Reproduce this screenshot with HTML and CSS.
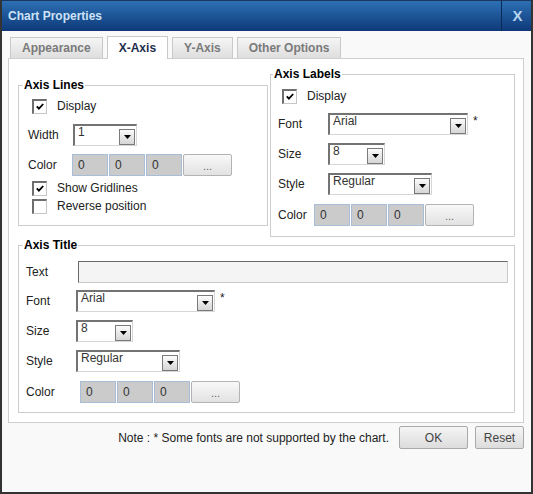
FILE: index.html
```html
<!DOCTYPE html>
<html>
<head>
<meta charset="utf-8">
<title>Chart Properties</title>
<link rel="stylesheet" href="styles.css">
</head>
<body>
<div class="window">
  <div class="titlebar">
    <span class="title">Chart Properties</span>
    <span class="close">X</span>
  </div>
  <div class="body">
    <div class="tabs">
      <div class="tab">Appearance</div>
      <div class="tab active">X-Axis</div>
      <div class="tab">Y-Axis</div>
      <div class="tab">Other Options</div>
    </div>
    <div class="panel">
      <div class="top-row">
        <fieldset class="group lines">
          <legend>Axis Lines</legend>
          <div class="check-row first">
            <span class="cb"><svg width="8" height="7" viewBox="0 0 8 7"><polyline points="0.8,3.4 2.9,5.6 7.2,1" fill="none" stroke="#000" stroke-width="1.8"/></svg></span>
            <span class="cb-label">Display</span>
          </div>
          <div class="row mt9">
            <span class="lbl w45">Width</span>
            <div class="select s64"><span class="val">1</span><span class="arr"><svg width="7" height="4" viewBox="0 0 7 4"><polygon points="0,0 7,0 3.5,4" fill="#000"/></svg></span></div>
          </div>
          <div class="row mt8">
            <span class="lbl w44">Color</span>
            <span class="rgb">0</span><span class="rgb">0</span><span class="rgb">0</span><span class="dots">...</span>
          </div>
          <div class="check-row mt3">
            <span class="cb"><svg width="8" height="7" viewBox="0 0 8 7"><polyline points="0.8,3.4 2.9,5.6 7.2,1" fill="none" stroke="#000" stroke-width="1.8"/></svg></span>
            <span class="cb-label">Show Gridlines</span>
          </div>
          <div class="check-row">
            <span class="cb"></span>
            <span class="cb-label">Reverse position</span>
          </div>
        </fieldset>
        <fieldset class="group labels">
          <legend>Axis Labels</legend>
          <div class="check-row first">
            <span class="cb"><svg width="8" height="7" viewBox="0 0 8 7"><polyline points="0.8,3.4 2.9,5.6 7.2,1" fill="none" stroke="#000" stroke-width="1.8"/></svg></span>
            <span class="cb-label">Display</span>
          </div>
          <div class="row mt8">
            <span class="lbl w50">Font</span>
            <div class="select s140"><span class="val">Arial</span><span class="arr"><svg width="7" height="4" viewBox="0 0 7 4"><polygon points="0,0 7,0 3.5,4" fill="#000"/></svg></span></div>
            <span class="star">*</span>
          </div>
          <div class="row mt8">
            <span class="lbl w50">Size</span>
            <div class="select s57"><span class="val">8</span><span class="arr"><svg width="7" height="4" viewBox="0 0 7 4"><polygon points="0,0 7,0 3.5,4" fill="#000"/></svg></span></div>
          </div>
          <div class="row mt8">
            <span class="lbl w50">Style</span>
            <div class="select s104"><span class="val">Regular</span><span class="arr"><svg width="7" height="4" viewBox="0 0 7 4"><polygon points="0,0 7,0 3.5,4" fill="#000"/></svg></span></div>
          </div>
          <div class="row mt9">
            <span class="lbl w36">Color</span>
            <span class="rgb">0</span><span class="rgb">0</span><span class="rgb">0</span><span class="dots">...</span>
          </div>
        </fieldset>
      </div>
      <fieldset class="group title-group">
        <legend>Axis Title</legend>
        <div class="row">
          <span class="lbl w51">Text</span>
          <span class="text-input"></span>
        </div>
        <div class="row mt7">
          <span class="lbl w50">Font</span>
          <div class="select s139"><span class="val">Arial</span><span class="arr"><svg width="7" height="4" viewBox="0 0 7 4"><polygon points="0,0 7,0 3.5,4" fill="#000"/></svg></span></div>
          <span class="star">*</span>
        </div>
        <div class="row mt8">
          <span class="lbl w50">Size</span>
          <div class="select s57"><span class="val">8</span><span class="arr"><svg width="7" height="4" viewBox="0 0 7 4"><polygon points="0,0 7,0 3.5,4" fill="#000"/></svg></span></div>
        </div>
        <div class="row mt8">
          <span class="lbl w50">Style</span>
          <div class="select s104"><span class="val">Regular</span><span class="arr"><svg width="7" height="4" viewBox="0 0 7 4"><polygon points="0,0 7,0 3.5,4" fill="#000"/></svg></span></div>
        </div>
        <div class="row mt9">
          <span class="lbl w54">Color</span>
          <span class="rgb">0</span><span class="rgb">0</span><span class="rgb">0</span><span class="dots">...</span>
        </div>
      </fieldset>
    </div>
    <div class="footer">
      <span class="note">Note : * Some fonts are not supported by the chart.</span>
      <button class="btn ok">OK</button>
      <button class="btn reset">Reset</button>
    </div>
  </div>
</div>
</body>
</html>
```
FILE: styles.css
```css
html, body {
  margin: 0;
  padding: 0;
  background: #ffffff;
}
body {
  font-family: "Liberation Sans", Arial, sans-serif;
  font-size: 12px;
  color: #222;
}
.window {
  width: 533px;
  height: 494px;
  box-sizing: border-box;
  border: 2px solid #333;
  border-top: 1px solid #1b3560;
  background: #f9f9f9;
  display: flex;
  flex-direction: column;
}
.titlebar {
  display: flex;
  height: 30px;
  background: linear-gradient(#2c70b4, #0e3979);
  flex: none;
}
.title {
  flex: 1;
  padding-left: 6px;
  line-height: 30px;
  font-weight: bold;
  font-size: 12px;
  color: #cde2f6;
}
.close {
  width: 30px;
  box-sizing: border-box;
  border-left: 1px solid #0a2a56;
  line-height: 30px;
  text-align: center;
  font-weight: bold;
  font-size: 15px;
  color: #b7d5f0;
  padding-left: 2px;
}
.body {
  padding: 6px 7px 0 6px;
}
.tabs {
  display: flex;
  align-items: flex-end;
  gap: 4px;
  margin-left: 2px;
  height: 21px;
}
.tab {
  height: 20px;
  line-height: 20px;
  padding: 0 11px;
  border: 1px solid #c9c9c9;
  border-bottom: none;
  background: linear-gradient(#f5f5f5, #dedede);
  color: #7a7a7a;
  font-weight: bold;
  font-size: 12px;
}
.tab.active {
  height: 22px;
  line-height: 22px;
  margin-bottom: -1px;
  background: #fff;
  color: #1e2f4d;
  position: relative;
}
.panel {
  border: 1px solid #cfcfcf;
  background: #fff;
  padding: 8px 8px 9px 9px;
}
.top-row {
  display: flex;
  align-items: flex-start;
  gap: 2px;
}
.group {
  border: 1px solid #cdcdcd;
  margin: 0;
  padding: 0;
  min-width: 0;
  box-sizing: border-box;
}
.group legend {
  font-weight: bold;
  font-size: 12px;
  line-height: 14px;
  padding: 0 1px;
  color: #000;
}
.lines {
  width: 250px;
  margin-top: 11px;
  padding: 5px 0 10px 9px;
}
.lines legend { margin-left: -5px; }
.labels {
  width: 245px;
  padding: 6px 0 10px 7px;
}
.labels legend { margin-left: -5px; }
.title-group {
  width: 497px;
  margin-top: 1px;
  padding: 9px 0 9px 7px;
}
.title-group legend { margin-left: -3px; }
.row {
  display: flex;
  align-items: center;
  height: 22px;
}
.check-row {
  display: flex;
  align-items: center;
  height: 18px;
  padding-left: 4px;
}
.mt3 { margin-top: 3px; }
.mt7 { margin-top: 7px; }
.mt8 { margin-top: 8px; }
.mt9 { margin-top: 9px; }
.lbl { flex: none; color: #222; }
.w36 { width: 36px; }
.w44 { width: 44px; }
.w45 { width: 45px; }
.w50 { width: 50px; }
.w51 { width: 51px; }
.w54 { width: 54px; }
.cb {
  width: 15px;
  height: 15px;
  box-sizing: border-box;
  border-top: 2px solid #6e6e6e;
  border-left: 2px solid #6e6e6e;
  border-right: 1px solid #c6c6c6;
  border-bottom: 1px solid #c6c6c6;
  background: #fff;
  display: flex;
  align-items: center;
  justify-content: center;
  margin-right: 10px;
  flex: none;
}
.cb svg { display: block; }
.cb-label { color: #222; }
.select {
  display: flex;
  height: 22px;
  box-sizing: border-box;
  border-top: 2px solid #737373;
  border-left: 2px solid #737373;
  border-right: 1px solid #d6d6d6;
  border-bottom: 1px solid #d6d6d6;
  background: #fff;
  flex: none;
}
.s57 { width: 57px; }
.s64 { width: 64px; }
.s104 { width: 104px; }
.s139 { width: 139px; }
.s140 { width: 140px; }
.select .val {
  flex: 1;
  padding-left: 3px;
  line-height: 13px;
  color: #333;
}
.select .arr {
  align-self: flex-end;
  width: 16px;
  height: 16px;
  box-sizing: border-box;
  margin-right: 1px;
  border: 1px solid #7a7a7a;
  background: linear-gradient(#fbfbfb, #d6d6d6);
  display: flex;
  align-items: center;
  justify-content: center;
}
.select .arr svg { display: block; }
.star {
  align-self: flex-start;
  margin-left: 5px;
  padding-top: 2px;
  line-height: 12px;
  color: #222;
}
.rgb {
  width: 36px;
  height: 22px;
  box-sizing: border-box;
  border: 1px solid #a9bdd7;
  background: #cbcbcb;
  padding-left: 5px;
  line-height: 20px;
  color: #333;
  margin-right: 1px;
  flex: none;
}
.dots {
  width: 49px;
  height: 22px;
  box-sizing: border-box;
  border: 1px solid #b3b3b3;
  border-radius: 2px;
  background: linear-gradient(#f8f8f8, #e2e2e2);
  text-align: center;
  line-height: 22px;
  font-size: 11px;
  color: #666;
  flex: none;
}
.text-input {
  width: 430px;
  height: 22px;
  box-sizing: border-box;
  margin-left: 1px;
  border: 1px solid #cacaca;
  border-top-color: #6a6a6a;
  border-left-color: #6a6a6a;
  background: #f4f4f4;
}
.footer {
  display: flex;
  justify-content: flex-end;
  align-items: center;
  margin-top: 3px;
}
.note {
  margin-right: 10px;
  color: #222;
}
.btn {
  height: 23px;
  box-sizing: border-box;
  border: 1px solid #a9a9a9;
  border-radius: 2px;
  background: linear-gradient(#f5f5f5, #dcdcdc);
  font-family: "Liberation Sans", Arial, sans-serif;
  font-size: 12px;
  color: #444;
  padding: 0;
}
.ok { width: 69px; margin-right: 7px; }
.reset { width: 49px; }
```
